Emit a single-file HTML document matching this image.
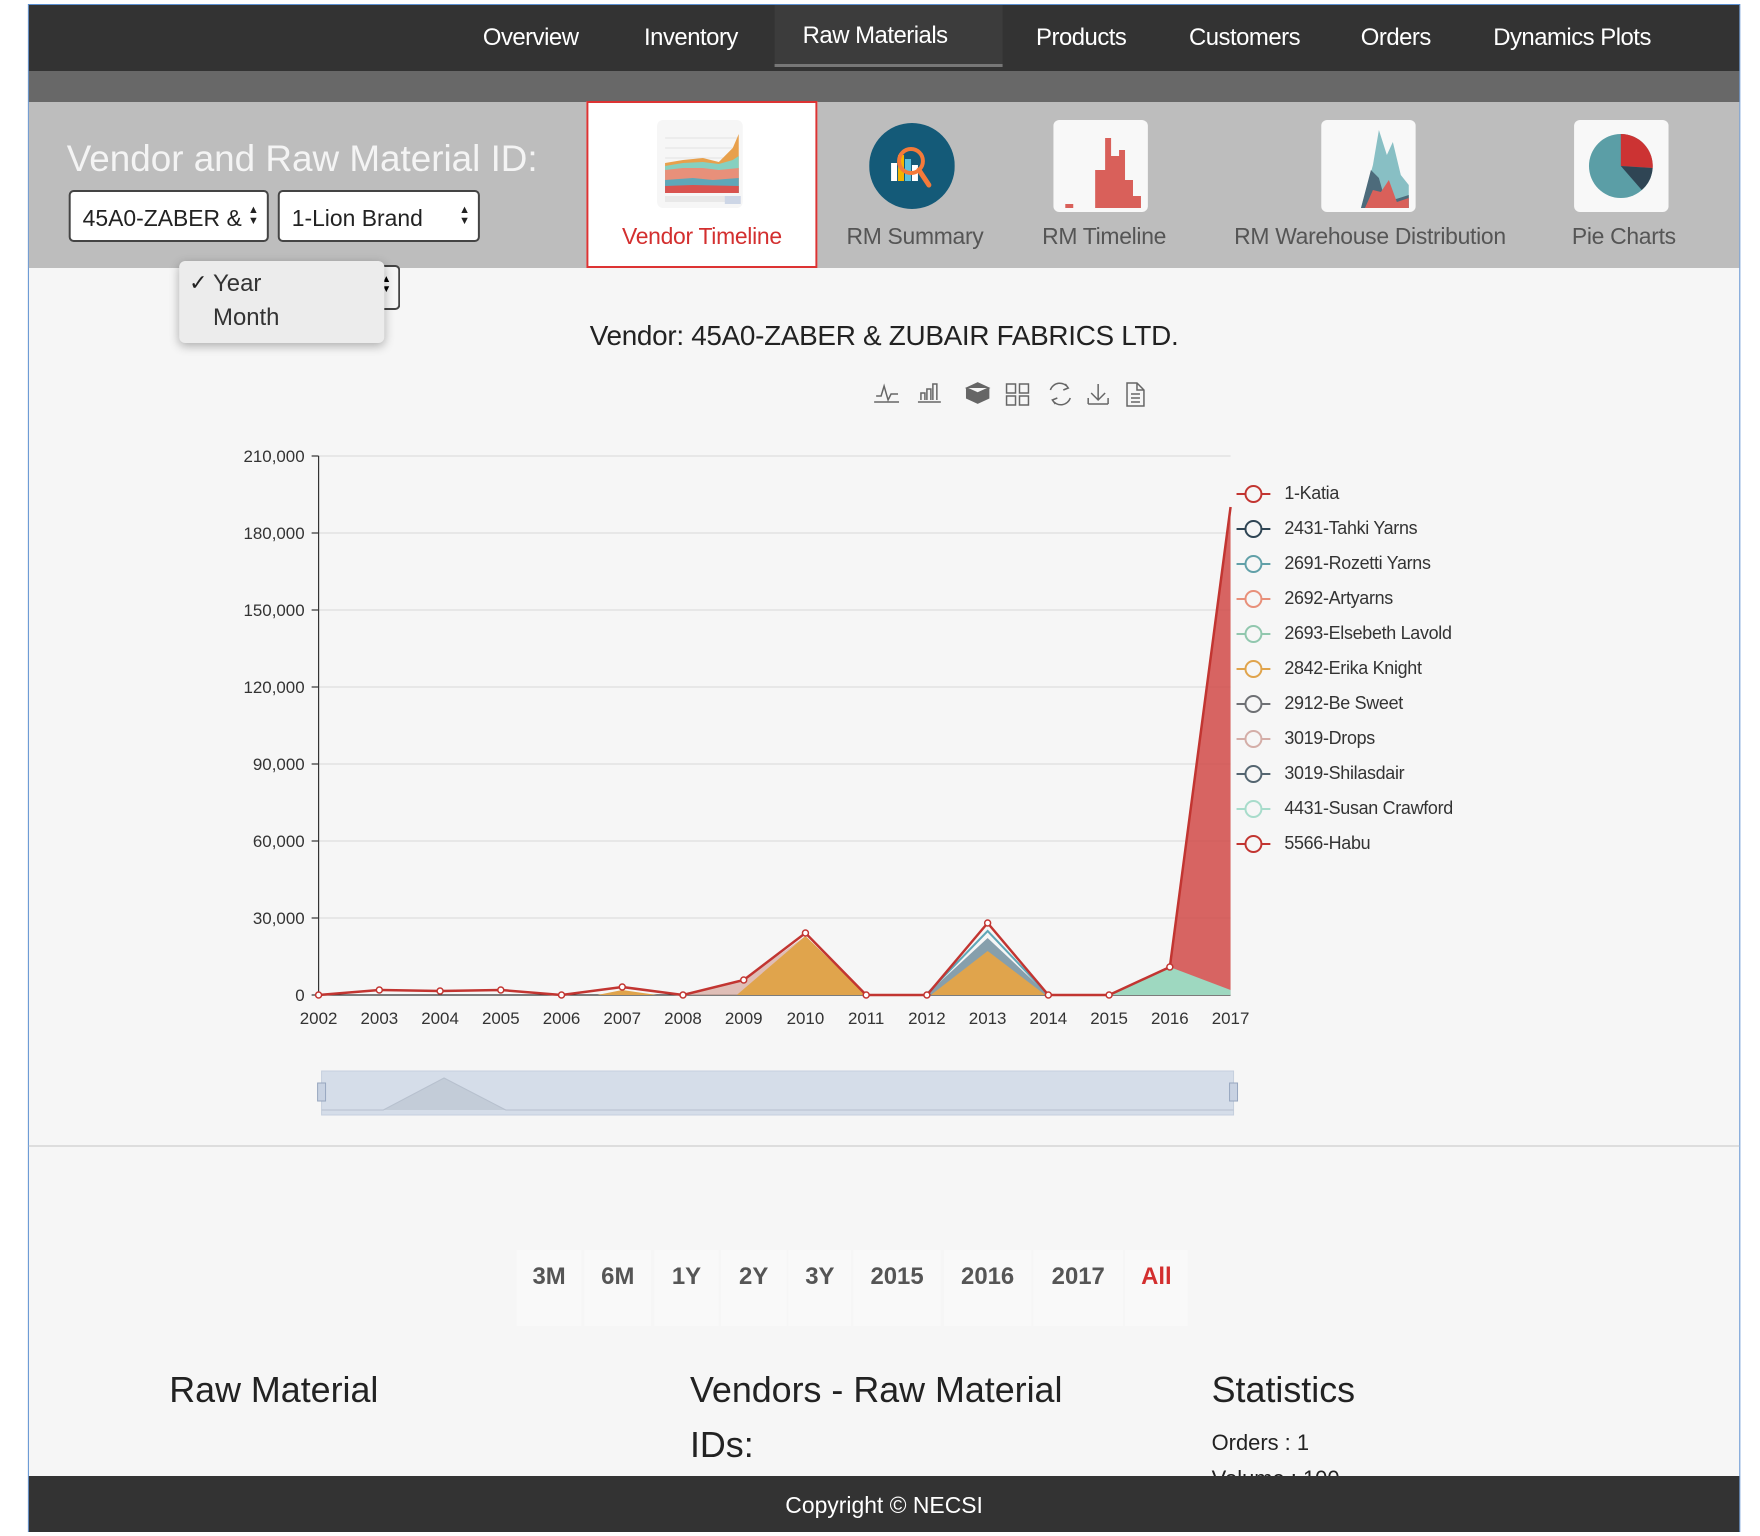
<!DOCTYPE html>
<html><head><meta charset="utf-8"><style>
*{margin:0;padding:0;box-sizing:border-box}
body{width:1760px;height:1536px;background:#fff;position:relative;overflow:hidden;font-family:"Liberation Sans",sans-serif}
#w{position:absolute;left:0;top:0;width:1760px;height:1536px;transform:scale(0.9956,1);transform-origin:0 0}
.a{position:absolute}
#frame{left:28px;top:4px;width:1720px;height:1528px;background:#f6f6f6;border:1px solid #5b8fd0;overflow:hidden}
.nav{color:#fff;font-size:24px;top:24px;transform:translateX(-50%);white-space:nowrap;letter-spacing:-0.5px}
.lbl{font-size:23px;color:#555;transform:translateX(-50%);white-space:nowrap;top:223px;letter-spacing:-0.3px}
.sel{background:#fff;border:2px solid #444;border-radius:5px;height:52px;font-size:23px;color:#222;padding:13px 0 0 12px}
.arr{position:absolute;right:8px;top:13px;font-size:11px;line-height:11px;color:#222}
.btn{top:1250px;height:76px;background:#f9f9f9;font-size:24px;font-weight:bold;color:#555;text-align:center;padding-top:13px}
.h{font-size:36px;color:#222}
</style></head><body><div id="w">
<div class="a" id="frame"></div>
<div class="a" style="left:29px;top:5px;width:1718px;height:66px;background:#333"></div>
<div class="a" style="left:778px;top:5px;width:229px;height:62px;background:#3c3c3c;border-bottom:3px solid #777"></div>
<div class="a nav" style="left:533px">Overview</div>
<div class="a nav" style="left:694px">Inventory</div>
<div class="a nav" style="left:879px;top:22px">Raw Materials</div>
<div class="a nav" style="left:1086px">Products</div>
<div class="a nav" style="left:1250px">Customers</div>
<div class="a nav" style="left:1402px">Orders</div>
<div class="a nav" style="left:1579px">Dynamics Plots</div>
<div class="a" style="left:29px;top:71px;width:1718px;height:31px;background:#686868"></div>
<div class="a" style="left:29px;top:102px;width:1718px;height:166px;background:#bdbdbd"></div>
<div class="a" style="left:67px;top:138px;font-size:37px;color:#f4f4f4;white-space:nowrap">Vendor and Raw Material ID:</div>
<div class="a sel" style="left:69px;top:190px;width:201px">45A0-ZABER &amp;<span class="arr">▲<br>▼</span></div>
<div class="a sel" style="left:279px;top:190px;width:203px">1-Lion Brand<span class="arr">▲<br>▼</span></div>
<div class="a" style="left:589px;top:101px;width:232px;height:167px;background:#fff;border:2px solid #d33"></div>
<svg class="a" style="left:656px;top:118px" width="93" height="92" viewBox="0 0 93 92">
<rect x="4" y="2" width="86" height="88" rx="6" fill="#f6f6f6"/>
<g stroke="#e3e3e3"><line x1="12" y1="20" x2="86" y2="20"/><line x1="12" y1="30" x2="86" y2="30"/><line x1="12" y1="40" x2="86" y2="40"/></g>
<path d="M12 45 L30 42 L50 40 L66 44 L80 30 L86 16 L86 75 L12 75Z" fill="#e8a04c"/>
<path d="M12 48 L30 45 L50 44 L66 46 L80 42 L86 38 L86 75 L12 75Z" fill="#86d0c0"/>
<path d="M12 52 L30 50 L50 50 L66 52 L86 50 L86 75 L12 75Z" fill="#e8907a"/>
<path d="M12 62 L40 60 L60 62 L86 60 L86 75 L12 75Z" fill="#5fa7b8"/>
<path d="M12 68 L40 67 L86 68 L86 75 L12 75Z" fill="#d9534f"/>
<rect x="12" y="78" width="74" height="6" fill="#e8e8e8"/><rect x="72" y="78" width="16" height="8" fill="#cdd6e6"/>
</svg>
<div class="a lbl" style="left:705px;color:#d32f2f">Vendor Timeline</div>
<svg class="a" style="left:873px;top:123px" width="86" height="86" viewBox="0 0 86 86">
<circle cx="43" cy="43" r="43" fill="#145a78"/>
<rect x="22" y="40" width="6" height="18" fill="#fff"/><rect x="29" y="32" width="6" height="26" fill="#f5b400"/><rect x="36" y="36" width="6" height="22" fill="#5bc0de"/><rect x="43" y="42" width="6" height="16" fill="#fff"/>
<circle cx="42" cy="38" r="12" fill="none" stroke="#f47a3a" stroke-width="4"/><line x1="50" y1="47" x2="60" y2="62" stroke="#f47a3a" stroke-width="5" stroke-linecap="round"/>
</svg>
<div class="a lbl" style="left:919px">RM Summary</div>
<svg class="a" style="left:1058px;top:120px" width="95" height="92" viewBox="0 0 95 92">
<rect width="95" height="92" rx="6" fill="#f8f8f8"/>
<path d="M12 88 L12 84 L20 84 L20 88 L42 88 L42 50 L52 50 L52 18 L58 18 L58 36 L66 36 L66 30 L72 30 L72 60 L80 60 L80 76 L88 76 L88 88Z" fill="#d9605a"/>
</svg>
<div class="a lbl" style="left:1109px">RM Timeline</div>
<svg class="a" style="left:1327px;top:120px" width="95" height="92" viewBox="0 0 95 92">
<rect width="95" height="92" rx="6" fill="#f8f8f8"/>
<path d="M40 88 L52 45 L58 10 L66 35 L72 22 L80 55 L88 65 L88 88Z" fill="#88bfc4"/>
<path d="M40 88 L50 50 L58 58 L62 72 L72 80 L88 75 L88 88Z" fill="#4d6b7b"/>
<path d="M44 88 L52 70 L60 72 L68 60 L76 82 L88 78 L88 88Z" fill="#d9605a"/>
</svg>
<div class="a lbl" style="left:1376px">RM Warehouse Distribution</div>
<svg class="a" style="left:1581px;top:120px" width="95" height="92" viewBox="0 0 95 92">
<rect width="95" height="92" rx="6" fill="#f8f8f8"/>
<circle cx="47" cy="46" r="32" fill="#5b9ea6"/>
<path d="M47 46 L47 14 A32 32 0 0 1 79 48Z" fill="#cc3333"/>
<path d="M47 46 L79 48 A32 32 0 0 1 68 70Z" fill="#2f4554"/>
</svg>
<div class="a lbl" style="left:1631px">Pie Charts</div>
<div class="a" style="left:375px;top:265px;width:27px;height:45px;border:2px solid #444;border-left:none;border-radius:0 5px 5px 0;background:#f6f6f6;font-size:10px;line-height:10px;padding:8px 0 0 8px">▲<br>▼</div>
<div class="a" style="left:180px;top:261px;width:206px;height:82px;background:#ececec;border-radius:6px;box-shadow:0 3px 10px rgba(0,0,0,.3)"></div>
<div class="a" style="left:190px;top:270px;font-size:22px;color:#222">✓</div>
<div class="a" style="left:214px;top:270px;font-size:24px;color:#333">Year</div>
<div class="a" style="left:214px;top:304px;font-size:24px;color:#333">Month</div>
<div class="a" style="left:888px;top:320px;transform:translateX(-50%);font-size:28px;color:#222;white-space:nowrap;letter-spacing:-0.3px">Vendor: 45A0-ZABER &amp; ZUBAIR FABRICS LTD.</div>
<svg class="a" style="left:875px;top:380px" width="290" height="30" viewBox="0 0 290 30" fill="none" stroke="#666" stroke-width="1.5">
<path d="M3 22 H28 M5 16 L10 16 L13 6 L17 20 L20 14 L27 14"/>
<path d="M47 22 H70 M50 20 V13 H54 V20 M56 20 V9 H60 V20 M62 20 V4 H66 V20"/>
<path d="M96 8 L107 3 L118 8 L107 13Z M96 8 V18 L107 23 L118 18 V8 M96 13 L107 18 L118 13" fill="#666"/>
<path d="M136 4 h9 v9 h-9z M149 4 h9 v9 h-9z M136 16 h9 v9 h-9z M149 16 h9 v9 h-9z"/>
<path d="M180 10 A10 10 0 0 1 198 8 M200 18 A10 10 0 0 1 182 20 M195 4 L198 8 L193 10 M185 24 L182 20 L187 18"/>
<path d="M218 24 H238 M228 4 V20 M221 13 L228 20 L235 13 M218 18 V24 M238 18 V24"/>
<path d="M264 3 H257 V26 H274 V10 L267 3Z M267 3 V10 H274 M261 14 H270 M261 18 H270 M261 22 H270"/>
</svg>
<svg class="a" style="left:0;top:0" width="1760" height="1160">
<g stroke="#e2e2e2" stroke-width="1.5">
<line x1="320" y1="456" x2="1236" y2="456"/><line x1="320" y1="533" x2="1236" y2="533"/><line x1="320" y1="610" x2="1236" y2="610"/><line x1="320" y1="687" x2="1236" y2="687"/><line x1="320" y1="764" x2="1236" y2="764"/><line x1="320" y1="841" x2="1236" y2="841"/><line x1="320" y1="918" x2="1236" y2="918"/>
</g>
<g font-size="17" fill="#333" text-anchor="end" font-family="Liberation Sans">
<text x="306" y="462">210,000</text><text x="306" y="539">180,000</text><text x="306" y="616">150,000</text><text x="306" y="693">120,000</text><text x="306" y="770">90,000</text><text x="306" y="847">60,000</text><text x="306" y="924">30,000</text><text x="306" y="1001">0</text>
</g>
<g stroke="#333" stroke-width="1.2"><line x1="320" y1="456" x2="320" y2="995"/><line x1="320" y1="995" x2="1236" y2="995"/>
<line x1="313" y1="456" x2="320" y2="456"/><line x1="313" y1="533" x2="320" y2="533"/><line x1="313" y1="610" x2="320" y2="610"/><line x1="313" y1="687" x2="320" y2="687"/><line x1="313" y1="764" x2="320" y2="764"/><line x1="313" y1="841" x2="320" y2="841"/><line x1="313" y1="918" x2="320" y2="918"/><line x1="313" y1="995" x2="320" y2="995"/></g>
<g font-size="17" fill="#333" text-anchor="middle" font-family="Liberation Sans">
<text x="320" y="1024">2002</text><text x="381" y="1024">2003</text><text x="442" y="1024">2004</text><text x="503" y="1024">2005</text><text x="564" y="1024">2006</text><text x="625" y="1024">2007</text><text x="686" y="1024">2008</text><text x="747" y="1024">2009</text><text x="809" y="1024">2010</text><text x="870" y="1024">2011</text><text x="931" y="1024">2012</text><text x="992" y="1024">2013</text><text x="1053" y="1024">2014</text><text x="1114" y="1024">2015</text><text x="1175" y="1024">2016</text><text x="1236" y="1024">2017</text>
</g>
<path d="M686 995 L747 980 L809 936 L870 995Z" fill="#d9b0a8" opacity=".8"/>
<path d="M930 995 L992 938 L1053 995Z" fill="#6a8a9a" opacity=".8"/>
<path d="M1114 995 L1175 967 L1236 507 L1236 995Z" fill="#d14a48" opacity=".85"/>
<path d="M1114 995 L1175 967 L1236 990 L1236 995Z" fill="#9ed8c0"/>
<path d="M740 995 L809 936 L870 995Z" fill="#e0a44c"/>
<path d="M935 995 L992 951 L1050 995Z" fill="#e0a44c"/>
<path d="M600 995 L625 990 L660 995Z" fill="#e0a44c"/>
<path d="M930 995 L992 931 L1053 995" fill="none" stroke="#5fa7b8" stroke-width="2"/>
<path d="M320 995 L381 990 L442 991 L503 990 L564 995 L625 987 L686 995 L747 980 L809 933 L870 995 L931 995 L992 923 L1053 995 L1114 995 L1175 967 L1236 507" fill="none" stroke="#c23531" stroke-width="2.5"/>
<g fill="#fff" stroke="#c23531" stroke-width="1.5">
<circle cx="320" cy="995" r="3"/><circle cx="381" cy="990" r="3"/><circle cx="442" cy="991" r="3"/><circle cx="503" cy="990" r="3"/><circle cx="564" cy="995" r="3"/><circle cx="625" cy="987" r="3"/><circle cx="686" cy="995" r="3"/><circle cx="747" cy="980" r="3"/><circle cx="809" cy="933" r="3"/><circle cx="870" cy="995" r="3"/><circle cx="931" cy="995" r="3"/><circle cx="992" cy="923" r="3"/><circle cx="1053" cy="995" r="3"/><circle cx="1114" cy="995" r="3"/><circle cx="1175" cy="967" r="3"/></g>
<g stroke-width="2" fill="none">
<g stroke="#c23531"><line x1="1242" y1="494" x2="1276" y2="494"/><circle cx="1259" cy="494" r="8" fill="#f6f6f6"/></g>
<g stroke="#2f4554"><line x1="1242" y1="529" x2="1276" y2="529"/><circle cx="1259" cy="529" r="8" fill="#f6f6f6"/></g>
<g stroke="#61a0a8"><line x1="1242" y1="564" x2="1276" y2="564"/><circle cx="1259" cy="564" r="8" fill="#f6f6f6"/></g>
<g stroke="#e8907a"><line x1="1242" y1="599" x2="1276" y2="599"/><circle cx="1259" cy="599" r="8" fill="#f6f6f6"/></g>
<g stroke="#91c7ae"><line x1="1242" y1="634" x2="1276" y2="634"/><circle cx="1259" cy="634" r="8" fill="#f6f6f6"/></g>
<g stroke="#e0a44c"><line x1="1242" y1="669" x2="1276" y2="669"/><circle cx="1259" cy="669" r="8" fill="#f6f6f6"/></g>
<g stroke="#6e7074"><line x1="1242" y1="704" x2="1276" y2="704"/><circle cx="1259" cy="704" r="8" fill="#f6f6f6"/></g>
<g stroke="#d4aea8"><line x1="1242" y1="739" x2="1276" y2="739"/><circle cx="1259" cy="739" r="8" fill="#f6f6f6"/></g>
<g stroke="#546570"><line x1="1242" y1="774" x2="1276" y2="774"/><circle cx="1259" cy="774" r="8" fill="#f6f6f6"/></g>
<g stroke="#a8dccb"><line x1="1242" y1="809" x2="1276" y2="809"/><circle cx="1259" cy="809" r="8" fill="#f6f6f6"/></g>
<g stroke="#c23531"><line x1="1242" y1="844" x2="1276" y2="844"/><circle cx="1259" cy="844" r="8" fill="#f6f6f6"/></g>
</g>
<g font-size="18" fill="#333" font-family="Liberation Sans" letter-spacing="-0.3">
<text x="1290" y="499">1-Katia</text><text x="1290" y="534">2431-Tahki Yarns</text><text x="1290" y="569">2691-Rozetti Yarns</text><text x="1290" y="604">2692-Artyarns</text><text x="1290" y="639">2693-Elsebeth Lavold</text><text x="1290" y="674">2842-Erika Knight</text><text x="1290" y="709">2912-Be Sweet</text><text x="1290" y="744">3019-Drops</text><text x="1290" y="779">3019-Shilasdair</text><text x="1290" y="814">4431-Susan Crawford</text><text x="1290" y="849">5566-Habu</text>
</g>
<rect x="323" y="1071" width="916" height="44" fill="#d5dde9" stroke="#c5cfde"/>
<path d="M323 1110 L385 1110 L446 1078 L508 1110 L1239 1110" fill="#c3ccd8" stroke="#b7c0ce"/>
<rect x="319" y="1083" width="8" height="18" fill="#c8d2e2" stroke="#97a6bf"/>
<rect x="1235" y="1083" width="8" height="18" fill="#c8d2e2" stroke="#97a6bf"/>
<line x1="29" y1="1146" x2="1747" y2="1146" stroke="#ddd" stroke-width="2"/>
</svg>
<div class="a btn" style="left:519px;width:65px">3M</div>
<div class="a btn" style="left:587px;width:67px">6M</div>
<div class="a btn" style="left:657px;width:65px">1Y</div>
<div class="a btn" style="left:724px;width:66px">2Y</div>
<div class="a btn" style="left:792px;width:63px">3Y</div>
<div class="a btn" style="left:857px;width:88px">2015</div>
<div class="a btn" style="left:948px;width:88px">2016</div>
<div class="a btn" style="left:1038px;width:90px">2017</div>
<div class="a btn" style="left:1130px;width:63px;color:#d32f2f">All</div>
<div class="a h" style="left:170px;top:1369px">Raw Material</div>
<div class="a h" style="left:693px;top:1369px">Vendors - Raw Material</div>
<div class="a h" style="left:693px;top:1424px">IDs:</div>
<div class="a h" style="left:1217px;top:1369px">Statistics</div>
<div class="a" style="left:1217px;top:1430px;font-size:22px;color:#222">Orders : 1</div>
<div class="a" style="left:1217px;top:1466px;font-size:22px;color:#222">Volume : 100</div>
<div class="a" style="left:29px;top:1476px;width:1718px;height:56px;background:#333;color:#fff;font-size:23px;text-align:center;padding-top:16px">Copyright © NECSI</div>
</div></body></html>
